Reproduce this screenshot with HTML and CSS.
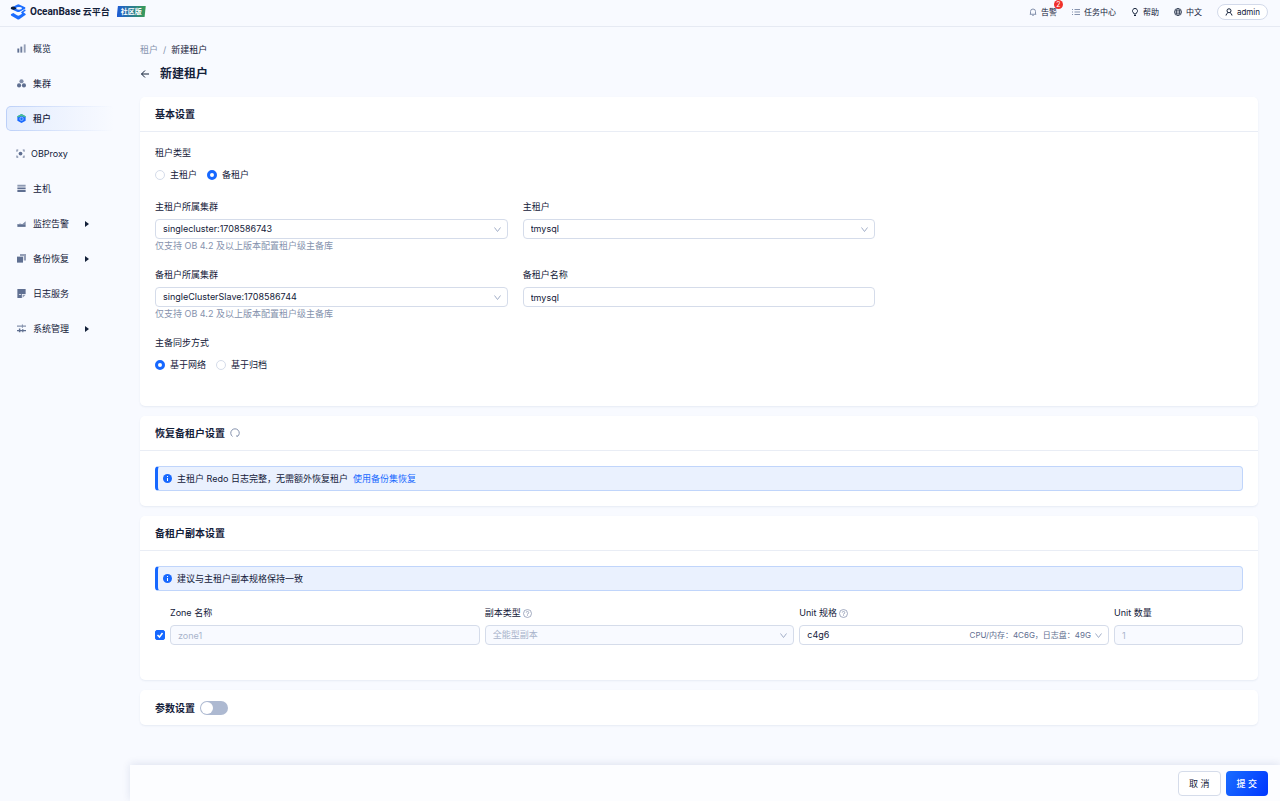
FILE: index.html
```html
<!DOCTYPE html>
<html lang="zh-CN">
  <head>
    <meta charset="UTF-8" />
    <meta name="viewport" content="width=device-width, initial-scale=1" />
    <title>新建租户 - OceanBase 云平台</title>
    <link rel="stylesheet" href="styles.css">
  </head>
  <body>
    <header class="topbar">
      <a class="brand" href="#">
        <svg class="brand-logo" viewBox="0 0 48 48">
          <path fill="#1a6dff" d="M21 2 Q25 0 29 2 L45 10 Q48 12 45 14 L29 23 Q25 25 21 23 L8 17 V9 Z" />
          <ellipse cx="27" cy="13" rx="9" ry="4" fill="#f8faff" />
          <path fill="#0c1c3a" d="M4 9 Q9 6 14 9 L19 12 Q20 14 17 15 L12 17 Q8 18 4 16 Q0 13 4 9 Z" />
          <path fill="#1a6dff" d="M45 16 L47 20 L40 25 L46 29 Q49 32 45 34 L29 45 Q25 48 21 45 L4 35 Q1 32 4 30 L10 27 L21 34 Q25 36 29 34 L36 29 L33 25 Z" />
        </svg>
        <span class="brand-name">OceanBase</span>
        <span class="brand-cn">云平台</span>
      </a>
      <span class="edition"><span>社区版</span></span>

      <nav class="top-links">
        <a class="top-link" href="#">
          <svg class="muted" viewBox="0 0 16 16"><path d="M3 12.5 V7 a5 5 0 0 1 10 0 V12.5 M1.5 12.5 H14.5 M6.5 14.8 H9.5" /></svg>
          告警
          <span class="badge">2</span>
        </a>
        <a class="top-link" href="#">
          <svg class="muted" viewBox="0 0 16 16"><path d="M5 3 H16 M5 8 H16 M5 13 H16 M0 3 H2 M0 8 H2 M0 13 H2" /></svg>
          任务中心
        </a>
        <a class="top-link" href="#">
          <svg viewBox="0 0 16 16"><path d="M6 12 V10.5 A5 5 0 1 1 10 10.5 V12 Z M6 15 H10" /></svg>
          帮助
        </a>
        <a class="top-link" href="#">
          <svg class="globe" viewBox="0 0 16 16"><circle cx="8" cy="8" r="7.2" /><ellipse cx="8" cy="8" rx="3.2" ry="7.2" /><path d="M1 8 H15 M2 4.5 H14 M2 11.5 H14" /></svg>
          中文
        </a>
        <button type="button" class="user">
          <svg viewBox="0 0 16 16"><circle cx="8" cy="5.5" r="4" /><path d="M2 15 Q2.5 11 6 9.2 M14 15 Q13.5 11 10 9.2" /></svg>
          admin
        </button>
      </nav>
    </header>

    <div class="layout">
      <nav class="sidebar">
        <a class="nav-item" href="#">
          <svg viewBox="0 0 24 24"><path d="M1 12h5v11H1z" /><path opacity=".9" d="M9 7h5v16H9z" /><path opacity=".65" d="M18 1h5v22h-5z" /></svg>
          概览
        </a>
        <a class="nav-item" href="#">
          <svg viewBox="0 0 24 24"><circle cx="12" cy="6" r="5.5" opacity=".8" /><circle cx="5.5" cy="17" r="5.5" /><circle cx="18.5" cy="17" r="5.5" /></svg>
          集群
        </a>
        <a class="nav-item active" href="#">
          <svg viewBox="0 0 24 24">
            <path fill="#1b6bff" d="M12 0 L23 6 V18 L12 24 L1 18 V6 Z" />
            <path fill="#4cc38a" d="M12 0 L23 6 V9 L17 7 L12 5 L7 7 L1 9 V6 Z" />
            <circle cx="12" cy="13" r="4.5" fill="#1b6bff" stroke="#a9ccff" stroke-width="2" />
          </svg>
          租户
        </a>
        <a class="nav-item compact" href="#">
          <svg viewBox="0 0 24 24"><circle cx="12" cy="12" r="5" /><path d="M1 1h5v3H4v3H1zM18 1h5v6h-3V4h-2zM1 17h3v3h2v3H1zM20 17h3v6h-5v-3h2z" opacity=".8" /></svg>
          OBProxy
        </a>
        <a class="nav-item" href="#">
          <svg viewBox="0 0 24 24"><path opacity=".7" d="M1 2h22v5H1z" /><path d="M1 9h22v5H1zM1 16h22v5H1z" /></svg>
          主机
        </a>
        <a class="nav-item" href="#">
          <svg viewBox="0 0 24 24"><path opacity=".8" d="M1 15 L8 12 L14 14 L23 6 V14 H1z" /><path d="M1 14 H23 V21 H1z" /></svg>
          监控告警
          <span class="caret"></span>
        </a>
        <a class="nav-item" href="#">
          <svg viewBox="0 0 24 24"><path d="M0 7h16v16H0z" /><path opacity=".65" d="M8 0h16v17h-6V5H8z" /></svg>
          备份恢复
          <span class="caret"></span>
        </a>
        <a class="nav-item" href="#">
          <svg viewBox="0 0 24 24"><path d="M1 0h22v13H13v11H1z" /><path opacity=".7" d="M15 15h8l-8 8z" /><path fill="#f8faff" d="M5 14h6v2H5z" /></svg>
          日志服务
        </a>
        <a class="nav-item" href="#">
          <svg viewBox="0 0 24 24"><path opacity=".75" d="M0 4h13V1h3v3h8v3h-8v3h-3V7H0z" /><path d="M0 16h5v-4h4v4h15v3H9v3H5v-3H0z" /><path d="M14 13h3v9h-3z" /></svg>
          系统管理
          <span class="caret"></span>
        </a>
      </nav>

      <div class="content">
        <main class="page">
          <div class="breadcrumb">
            <a href="#">租户</a>
            <span class="slash">/</span>
            <span>新建租户</span>
          </div>
          <div class="page-title">
            <a href="#" aria-label="返回">
              <svg viewBox="0 0 20 20"><path d="M18 10 H3 M10 3 L3 10 L10 17" /></svg>
            </a>
            <h1>新建租户</h1>
          </div>

          <section class="card">
            <div class="card-head"><h2>基本设置</h2></div>
            <div class="card-body">
              <fieldset class="field">
                <legend>租户类型</legend>
                <div class="radios">
                  <label><input type="radio" name="type" />主租户</label>
                  <label><input type="radio" name="type" checked />备租户</label>
                </div>
              </fieldset>

              <div class="form-row">
                <div class="field">
                  <label for="primary-cluster">主租户所属集群</label>
                  <div class="select">
                    <select id="primary-cluster"><option>singlecluster:1708586743</option></select>
                    <svg class="chevron" viewBox="0 0 14 14"><path d="M1 3 L7 11 L13 3" /></svg>
                  </div>
                  <p class="hint">仅支持 OB 4.2 及以上版本配置租户级主备库</p>
                </div>
                <div class="field">
                  <label for="primary-tenant">主租户</label>
                  <div class="select">
                    <select id="primary-tenant"><option>tmysql</option></select>
                    <svg class="chevron" viewBox="0 0 14 14"><path d="M1 3 L7 11 L13 3" /></svg>
                  </div>
                </div>
              </div>

              <div class="form-row">
                <div class="field">
                  <label for="standby-cluster">备租户所属集群</label>
                  <div class="select">
                    <select id="standby-cluster"><option>singleClusterSlave:1708586744</option></select>
                    <svg class="chevron" viewBox="0 0 14 14"><path d="M1 3 L7 11 L13 3" /></svg>
                  </div>
                  <p class="hint">仅支持 OB 4.2 及以上版本配置租户级主备库</p>
                </div>
                <div class="field">
                  <label for="standby-name">备租户名称</label>
                  <input class="text" type="text" id="standby-name" value="tmysql" />
                </div>
              </div>

              <fieldset class="field">
                <legend>主备同步方式</legend>
                <div class="radios">
                  <label><input type="radio" name="sync" checked />基于网络</label>
                  <label><input type="radio" name="sync" />基于归档</label>
                </div>
              </fieldset>
            </div>
          </section>

          <section class="card">
            <div class="card-head">
              <h2>恢复备租户设置</h2>
              <svg class="reload" viewBox="0 0 20 20"><path d="M5 17 A8.5 8.5 0 1 1 15 17 M14 14 V18" /></svg>
            </div>
            <div class="card-body">
              <div class="alert">
                <svg viewBox="0 0 18 18"><circle cx="9" cy="9" r="9" /><path d="M8 4h2v2H8zM8 8h2v6H8z" /></svg>
                <span>主租户 Redo 日志完整，无需额外恢复租户</span>
                <a href="#">使用备份集恢复</a>
              </div>
            </div>
          </section>

          <section class="card">
            <div class="card-head"><h2>备租户副本设置</h2></div>
            <div class="card-body">
              <div class="alert">
                <svg viewBox="0 0 18 18"><circle cx="9" cy="9" r="9" /><path d="M8 4h2v2H8zM8 8h2v6H8z" /></svg>
                <span>建议与主租户副本规格保持一致</span>
              </div>
              <div class="zone-row">
                <div class="check">
                  <input type="checkbox" aria-label="zone1" checked />
                  <svg viewBox="0 0 20 20"><path d="M5 10 L9 14 L15 6" /></svg>
                </div>
                <div class="field">
                  <label for="zone-name">Zone 名称</label>
                  <input class="text" type="text" id="zone-name" value="zone1" disabled />
                </div>
                <div class="field">
                  <label for="replica-type">副本类型
                    <svg class="help" viewBox="0 0 18 18"><circle cx="9" cy="9" r="8" /><path d="M6.5 7.2 A2.5 2.5 0 1 1 9 9.8 V11 M9 12.5 V14" /></svg>
                  </label>
                  <div class="select">
                    <select id="replica-type" disabled><option>全能型副本</option></select>
                    <svg class="chevron" viewBox="0 0 14 14"><path d="M1 3 L7 11 L13 3" /></svg>
                  </div>
                </div>
                <div class="field">
                  <label for="unit-spec">Unit 规格
                    <svg class="help" viewBox="0 0 18 18"><circle cx="9" cy="9" r="8" /><path d="M6.5 7.2 A2.5 2.5 0 1 1 9 9.8 V11 M9 12.5 V14" /></svg>
                  </label>
                  <div class="select">
                    <select id="unit-spec"><option>c4g6</option></select>
                    <span class="spec">CPU/内存：4C6G，日志盘：49G</span>
                    <svg class="chevron" viewBox="0 0 14 14"><path d="M1 3 L7 11 L13 3" /></svg>
                  </div>
                </div>
                <div class="field">
                  <label for="unit-count">Unit 数量</label>
                  <input class="text" type="text" id="unit-count" value="1" disabled />
                </div>
              </div>
            </div>
          </section>

          <section class="card">
            <div class="card-head last">
              <h2><label for="params">参数设置</label></h2>
              <input class="switch" type="checkbox" role="switch" id="params" />
            </div>
          </section>
        </main>

        <footer class="actions">
          <button type="button" class="btn">取 消</button>
          <button type="submit" class="btn primary">提 交</button>
        </footer>
      </div>
    </div>
  </body>
</html>
```

FILE: styles.css
```css
* {
  box-sizing: border-box;
}

body {
  margin: 0;
  height: 100vh;
  display: flex;
  flex-direction: column;
  background-color: #f8faff;
  color: #132039;
  font-family: Inter, "Noto Sans CJK SC", sans-serif;
  font-size: 9px;
  line-height: 14px;
}

a {
  color: inherit;
  text-decoration: none;
}

h1,
h2,
p {
  margin: 0;
}

button,
input,
select {
  font: inherit;
  color: inherit;
  margin: 0;
}

svg {
  flex: none;
  fill: none;
  stroke: currentColor;
}

/* top bar */
.topbar {
  display: flex;
  align-items: center;
  height: 27px;
  padding: 0 12px 3px 10px;
  border-bottom: 1px solid #e6eaf3;
}

.brand {
  display: flex;
  align-items: center;
  font-family: Roboto, "Noto Sans CJK SC", sans-serif;
  font-weight: bold;
}

.brand-logo {
  width: 16px;
  height: 16px;
  margin-right: 4px;
  stroke: none;
}

.brand-name {
  font-size: 10px;
  margin-right: 2px;
}

.edition {
  margin-left: 7px;
  padding: 0 4px;
  height: 11px;
  color: #fff;
  font-size: 7px;
  font-weight: bold;
  line-height: 11px;
  background: linear-gradient(90deg, #1d5bd6, #3a9d54);
  clip-path: polygon(4% 0, 100% 0, 96% 100%, 0 100%);
}

.top-links {
  display: flex;
  align-items: center;
  gap: 15px;
  margin-left: auto;
  font-size: 8px;
}

.top-link {
  position: relative;
  display: flex;
  align-items: center;
  gap: 4px;
}

.top-links svg {
  width: 8px;
  height: 8px;
  stroke-width: 2;
}

.top-links .muted {
  color: #8592ad;
}

.top-links .globe {
  stroke-width: 1.3;
}

.badge {
  position: absolute;
  top: -5px;
  right: -6px;
  width: 9px;
  height: 9px;
  border-radius: 50%;
  background-color: #f0302b;
  color: #fff;
  font-size: 7px;
  line-height: 9px;
  text-align: center;
}

.user {
  display: flex;
  align-items: center;
  gap: 4px;
  height: 16px;
  padding: 0 7px;
  border: 1px solid #d3daea;
  border-radius: 8px;
  background-color: #fff;
}

/* side menu */
.layout {
  flex: 1;
  display: flex;
  min-height: 0;
}

.sidebar {
  flex: none;
  width: 130px;
  padding: 9px 16px 0 6px;
  display: flex;
  flex-direction: column;
  gap: 10px;
}

.nav-item {
  display: flex;
  align-items: center;
  height: 25px;
  padding-left: 10px;
  border: 1px solid transparent;
  border-radius: 5px;
}

.nav-item svg {
  width: 9px;
  height: 9px;
  margin-right: 7px;
  color: #5f6f91;
  fill: currentColor;
  stroke: none;
}

.nav-item.compact {
  padding-left: 9px;
}

.nav-item.compact svg {
  margin-right: 6px;
}

/* the outline fades out to the right together with the fill */
.nav-item.active {
  font-weight: 500;
  border-right: none;
  background:
    linear-gradient(90deg, #e4edfe, #f8faff) padding-box,
    linear-gradient(90deg, #bcd0f8, #f8faff) border-box;
}

.caret {
  margin-left: 16px;
  border: 3px solid transparent;
  border-left: 4px solid #132039;
  border-right: none;
}

/* page */
.content {
  flex: 1;
  min-width: 0;
  display: flex;
  flex-direction: column;
}

.page {
  flex: 1;
  min-height: 0;
  overflow: auto;
  padding: 16px 22px 16px 10px;
}

.breadcrumb {
  display: flex;
  gap: 5px;
}

.breadcrumb a,
.slash {
  color: #8592ad;
}

.page-title {
  display: flex;
  align-items: center;
  gap: 10px;
  margin: 9px 0 15px;
}

.page-title svg {
  display: block;
  width: 10px;
  height: 10px;
  stroke-width: 2;
}

h1 {
  font-size: 12px;
  line-height: 16px;
}

.card {
  margin-bottom: 10px;
  border-radius: 5px;
  background-color: #fff;
  box-shadow: 0 1px 2px rgba(30, 60, 120, 0.08);
}

.card-head {
  display: flex;
  align-items: center;
  gap: 5px;
  height: 35px;
  padding: 0 15px;
  border-bottom: 1px solid #e9edf5;
}

.card-head.last {
  border-bottom: none;
}

h2 {
  font-size: 10px;
}

.reload {
  width: 10px;
  height: 10px;
  color: #8592ad;
  stroke-width: 2;
}

.card-body {
  padding: 15px;
}

/* form */
.form-row {
  display: grid;
  grid-template-columns: repeat(3, 1fr);
  gap: 15px;
}

.field {
  min-width: 0;
  margin: 0 0 16px;
  padding: 0;
  border: none;
}

.field > label,
legend {
  display: flex;
  align-items: center;
  gap: 2px;
  margin-bottom: 6px;
  padding: 0;
  line-height: 12px;
}

.help {
  width: 9px;
  height: 9px;
  color: #8592ad;
  stroke-width: 1.5;
}

.hint {
  color: #8592ad;
}

.text,
.select select {
  display: block;
  width: 100%;
  height: 20px;
  padding: 0 7px;
  border: 1px solid #d5dcea;
  border-radius: 4px;
  background-color: #fff;
  appearance: none;
}

.text:disabled,
.select select:disabled {
  background-color: #f8faff;
  color: #a9b4cb;
  opacity: 1;
}

.select {
  display: grid;
  align-items: center;
}

.select > * {
  grid-area: 1 / 1;
}

.chevron {
  width: 7px;
  height: 7px;
  margin-right: 7px;
  justify-self: end;
  color: #a3afc8;
  stroke-width: 2;
  pointer-events: none;
}

.spec {
  justify-self: end;
  margin-right: 18px;
  color: #5f6f91;
  font-size: 8px;
  pointer-events: none;
}

.radios {
  display: flex;
  gap: 10px;
  height: 20px;
}

.radios label {
  display: flex;
  align-items: center;
  gap: 5px;
}

.radios input {
  appearance: none;
  width: 10px;
  height: 10px;
  border: 1px solid #d5dcea;
  border-radius: 50%;
  background-color: #fff;
}

.radios input:checked {
  border: 3px solid #1668ff;
}

.alert {
  display: flex;
  align-items: center;
  gap: 5px;
  height: 25px;
  padding: 0 5px;
  border: 1px solid #c0d5fb;
  border-left: 3px solid #1668ff;
  border-radius: 4px;
  background-color: #eaf1fe;
}

.alert svg {
  width: 9px;
  height: 9px;
  fill: #1668ff;
  stroke: none;
}

.alert svg path {
  fill: #fff;
}

.alert a {
  color: #1668ff;
}

.zone-row {
  display: grid;
  grid-template-columns: 10px 12fr 12fr 12fr 5fr;
  gap: 5px;
  padding: 16px 0 4px;
}

.check {
  display: grid;
  align-self: end;
  margin-bottom: 21px;
}

.check > * {
  grid-area: 1 / 1;
  width: 10px;
  height: 10px;
}

.check input {
  appearance: none;
  border: 1px solid #d5dcea;
  border-radius: 2px;
  background-color: #fff;
}

.check input:checked {
  border-color: #1668ff;
  background-color: #1668ff;
}

.check svg {
  color: #fff;
  stroke-width: 3;
  pointer-events: none;
}

.switch {
  appearance: none;
  width: 28px;
  height: 14px;
  padding: 1px;
  border-radius: 7px;
  background-color: #adb9d1;
}

.switch::before {
  content: "";
  display: block;
  width: 12px;
  height: 12px;
  border-radius: 50%;
  background-color: #fff;
}

.switch:checked {
  background-color: #1668ff;
}

.switch:checked::before {
  margin-left: auto;
}

/* bottom actions */
.actions {
  display: flex;
  justify-content: flex-end;
  gap: 5px;
  padding: 6px 12px 5px;
  background-color: #fcfdff;
  box-shadow: 0 -1px 8px rgba(30, 60, 120, 0.12);
  z-index: 1;
}

.btn {
  height: 25px;
  padding: 0 10px;
  border: 1px solid #d5dcea;
  border-radius: 4px;
  background-color: #fff;
  cursor: pointer;
}

.btn.primary {
  border: none;
  padding: 0 11px;
  background: linear-gradient(120deg, #1a6dff, #0037ff);
  color: #fff;
  font-weight: 500;
}
```
